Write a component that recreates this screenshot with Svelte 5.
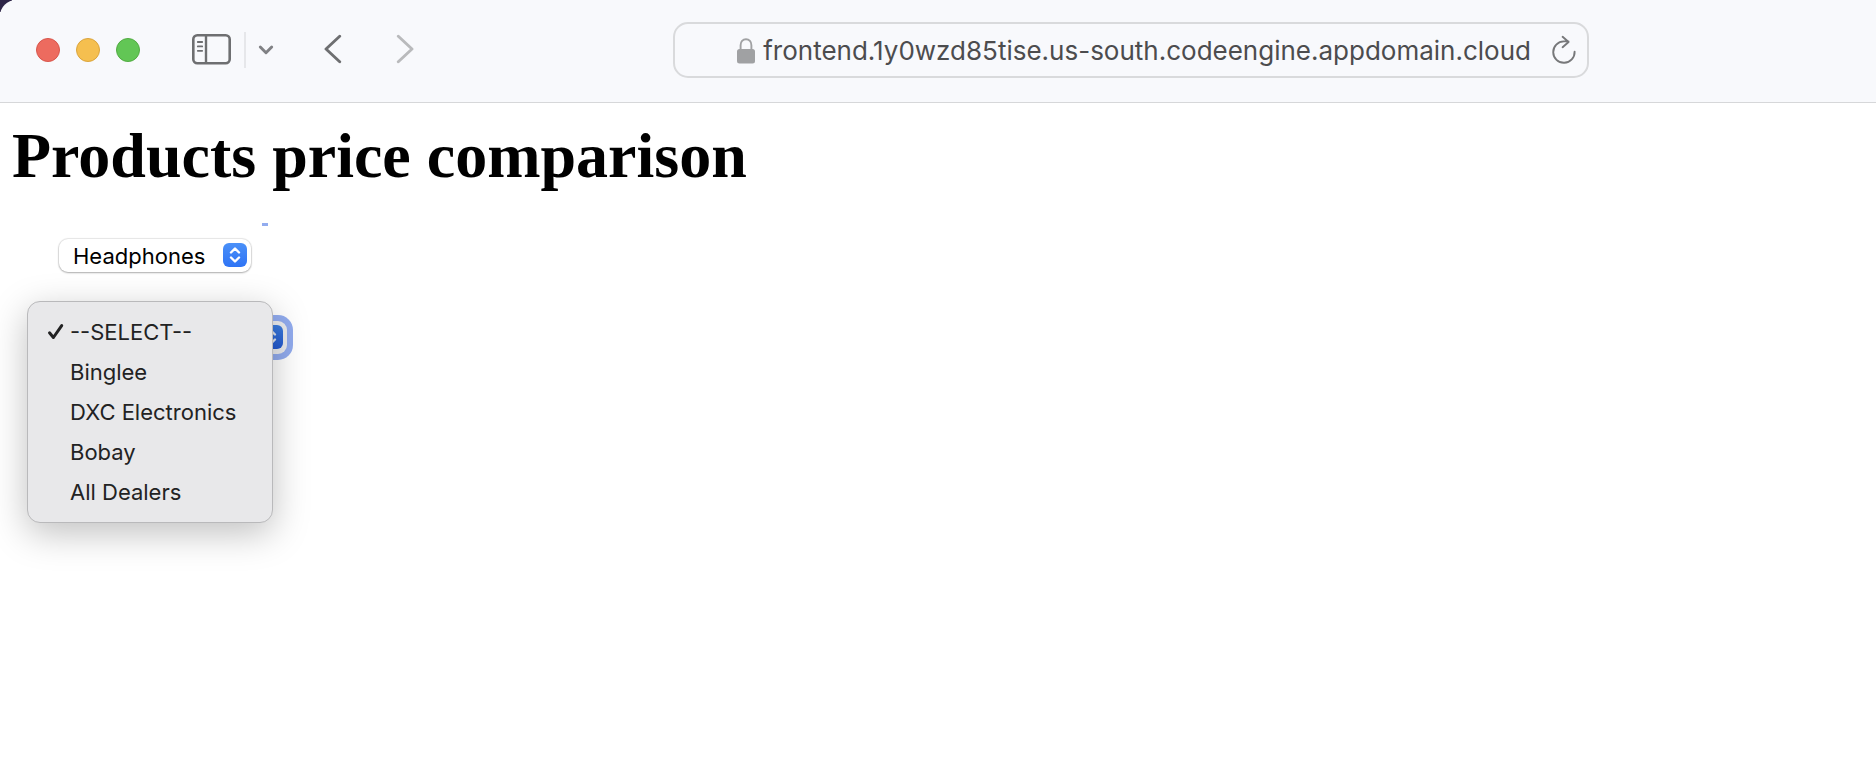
<script>
  let product = $state('Headphones');
  let dealer = $state('--SELECT--');
  const products = ['Headphones'];
  const dealers = ['--SELECT--', 'Binglee', 'DXC Electronics', 'Bobay', 'All Dealers'];
</script>

{#snippet stepper()}
  <svg class="stepper" viewBox="0 0 24 24" aria-hidden="true">
    <path d="M8 9.5 12 5.5 16 9.5M8 14.5 12 18.5 16 14.5" />
  </svg>
{/snippet}

<div class="window">
  <header class="toolbar">
    <div class="controls">
      <div class="lights">
        <button class="light close" aria-label="Close"></button>
        <button class="light minimize" aria-label="Minimize"></button>
        <button class="light zoom" aria-label="Zoom"></button>
      </div>
      <button class="icon sidebar" aria-label="Sidebar">
        <svg width="40" height="32" viewBox="0 0 40 32">
          <rect x="1.3" y="2.2" width="36.4" height="28" rx="4" stroke-width="2.6" />
          <path d="M14 2.5V30" stroke-width="2.4" />
          <path d="M5.8 9h4.4M5.8 13.4h4.4M5.8 17.8h4.4" stroke-width="1.8" stroke-linecap="round" />
        </svg>
      </button>
      <span class="divider"></span>
      <button class="icon groups" aria-label="Tab groups">
        <svg width="16" height="12" viewBox="0 0 16 12">
          <path d="M2.3 3 8 8.8 13.7 3" stroke-width="2.9" stroke-linecap="round" stroke-linejoin="round" />
        </svg>
      </button>
      <button class="icon back" aria-label="Back">
        <svg width="18" height="30" viewBox="0 0 18 30">
          <path d="M15.7 2.3 2 15 15.7 27.7" stroke-width="2.9" stroke-linecap="round" stroke-linejoin="round" />
        </svg>
      </button>
      <button class="icon forward" aria-label="Forward">
        <svg width="18" height="30" viewBox="0 0 18 30">
          <path d="M2.3 2.3 16 15 2.3 27.7" stroke-width="2.9" stroke-linecap="round" stroke-linejoin="round" />
        </svg>
      </button>
    </div>
    <div class="address">
      <svg class="lock" width="18" height="26" viewBox="0 0 18 26" aria-hidden="true">
        <path d="M3.6 12.5V7.2C3.6 3.8 5.8 1.3 9 1.3s5.4 2.5 5.4 5.9v5.3" fill="none" stroke="#a0a1a3" stroke-width="1.9" />
        <rect x="0" y="11" width="18" height="14.5" rx="2.5" fill="#a0a1a3" />
      </svg>
      <span class="url">frontend.1y0wzd85tise.us-south.codeengine.appdomain.cloud</span>
      <button class="icon reload" aria-label="Reload">
        <svg width="26" height="30" viewBox="0 0 26 30">
          <path d="M23.6 16.6A10.7 10.7 0 1 1 12.9 6.4H17.5M11.6 1.8 17.6 7 11.6 12.2" stroke-width="1.9" stroke-linecap="round" stroke-linejoin="round" />
        </svg>
      </button>
    </div>
  </header>

  <main>
    <h1>Products price comparison</h1>
    <div class="mark"></div>
    <div class="field product">
      <select aria-label="Product" bind:value={product}>
        {#each products as name}<option>{name}</option>{/each}
      </select>
      {@render stepper()}
    </div>
    <div class="field dealer">
      <select aria-label="Dealer" bind:value={dealer}>
        {#each dealers as name}<option>{name}</option>{/each}
      </select>
      {@render stepper()}
      <div class="menu" role="listbox" aria-label="Dealers">
        {#each dealers as name}
          <button class="item" role="option" aria-selected={name === dealer} onclick={() => (dealer = name)}>
            <span class="tick">
              {#if name === dealer}
                <svg width="18" height="18" viewBox="0 0 18 18">
                  <path d="M2.5 9.8 6.4 14.5 14.7 2.6" />
                </svg>
              {/if}
            </span>
            {name}
          </button>
        {/each}
      </div>
    </div>
  </main>
</div>

<style>
  :global(body) {
    margin: 0;
    background: #fff;
  }

  .window {
    min-height: 100vh;
    background: linear-gradient(#2d2547, #2d2547) 0 0 / 12px 12px no-repeat;
    font-family: Inter, "Liberation Sans", sans-serif;
  }

  button {
    margin: 0;
    padding: 0;
    border: 0;
    background: none;
    font: inherit;
  }

  .toolbar {
    display: grid;
    grid-template-columns: auto 259fr 916fr 287fr;
    align-items: center;
    padding: 22px 0 24px;
    border-bottom: 1px solid #d6d7d9;
    border-top-left-radius: 16px;
    background: #f8f9fc;
  }

  .controls {
    display: flex;
    align-items: center;
    padding-left: 36px;
  }

  .lights {
    display: flex;
    gap: 16px;
  }

  .light {
    box-sizing: border-box;
    width: 24px;
    height: 24px;
    border: 1px solid;
    border-radius: 50%;
  }

  .close {
    border-color: #d8564c;
    background: #ed6b5f;
  }

  .minimize {
    border-color: #dba53d;
    background: #f5bf4f;
  }

  .zoom {
    border-color: #52ac42;
    background: #62c655;
  }

  .icon {
    display: flex;
    color: #6e6f71;
  }

  .icon svg {
    fill: none;
    stroke: currentColor;
  }

  .sidebar {
    margin: 0 12px 2px 52px;
  }

  .divider {
    width: 2px;
    height: 36px;
    background: #e6e7ea;
  }

  .groups {
    margin-left: 12px;
    color: #808184;
  }

  .back {
    margin: 0 54px 2px 50px;
  }

  .forward {
    margin-bottom: 2px;
    color: #b9babc;
  }

  .address {
    grid-column: 3;
    box-sizing: border-box;
    display: flex;
    align-items: center;
    justify-content: flex-end;
    height: 56px;
    padding-right: 10px;
    border: 2px solid #d9dadc;
    border-radius: 15px;
  }

  .lock {
    flex: none;
    margin: 2px 8px 0 0;
  }

  .url {
    padding-top: 2px;
    color: #4c4c4e;
    font-size: 26px;
    line-height: 32px;
    white-space: nowrap;
  }

  .reload {
    margin-left: 20px;
    color: #77787a;
  }

  main {
    padding: 16px 12px;
  }

  h1 {
    margin: 0;
    color: #000;
    font: bold 64px/74px "Liberation Serif", serif;
  }

  .mark {
    width: 6px;
    height: 3px;
    margin: 30px 0 13px 250px;
    background: #92acef;
  }

  .field {
    position: relative;
    margin-left: 47px;
  }

  .product {
    width: 192px;
    margin-bottom: 49px;
  }

  .dealer {
    width: 228px;
  }

  select {
    appearance: none;
    display: block;
    box-sizing: border-box;
    width: 100%;
    height: 33px;
    padding: 0 36px 0 14px;
    border: 0;
    border-radius: 9px;
    outline: 0;
    background: #fff;
    box-shadow: 0 0 1px 1px #00000018, 0 1px 2px #00000040;
    color: #000;
    font: 22px/32px Inter, "Liberation Sans", sans-serif;
  }

  .stepper {
    position: absolute;
    top: 4px;
    right: 4px;
    width: 24px;
    height: 24px;
    border-radius: 6px;
    background: linear-gradient(#4a90f8, #2f74f5);
    fill: none;
    stroke: #fff;
    stroke-width: 2.4;
    stroke-linecap: round;
    stroke-linejoin: round;
    pointer-events: none;
  }

  .dealer select {
    background: #ebecee;
    box-shadow: 0 0 0 6px #92acef;
  }

  .dealer .stepper {
    background: linear-gradient(#3b7bdc, #2359d0);
    stroke: #dfe5f0;
  }

  .menu {
    position: absolute;
    top: -20px;
    left: -32px;
    box-sizing: border-box;
    width: 246px;
    padding: 10px 0;
    border: 1px solid #b9b9bb;
    border-radius: 13px;
    background: #e8e8ea;
    box-shadow: 0 10px 36px #00000040;
  }

  .item {
    display: flex;
    align-items: center;
    width: 100%;
    height: 40px;
    padding-left: 19px;
    color: #222223;
    font-size: 22px;
    line-height: 40px;
    text-align: left;
    white-space: nowrap;
  }

  .tick {
    display: flex;
    width: 23px;
  }

  .tick svg {
    fill: none;
    stroke: #222223;
    stroke-width: 3;
    stroke-linecap: round;
    stroke-linejoin: round;
  }
</style>
